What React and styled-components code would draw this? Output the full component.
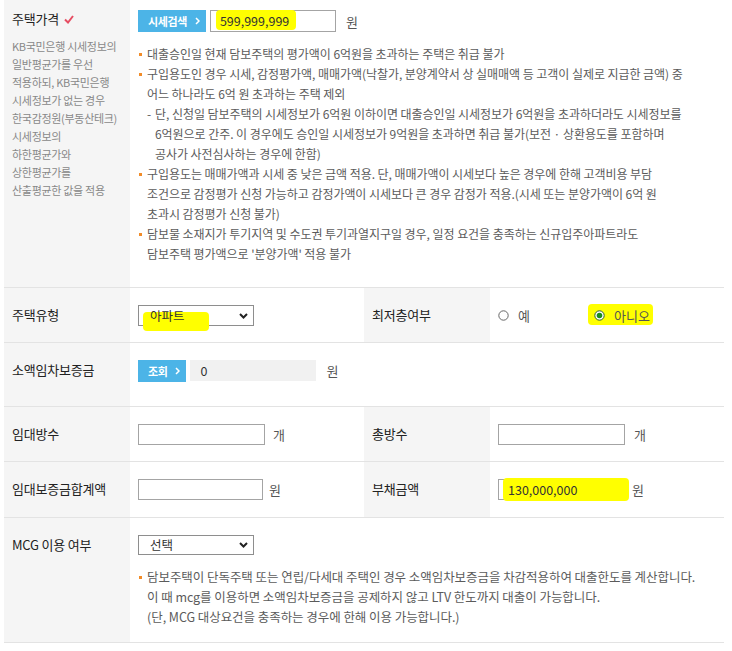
import React from "react";
import styled, { createGlobalStyle } from "styled-components";

const GlobalStyle = createGlobalStyle`
  html, body {
    margin: 0;
    padding: 0;
    background: #fff;
  }
  body {
    font-family: "Noto Sans CJK KR", "Noto Sans", sans-serif;
    color: #333;
  }
`;

const Table = styled.div`
  width: 720px;
  margin-left: 4px;
`;

const Row = styled.div`
  display: grid;
  grid-template-columns: ${(p) => (p.$split ? "126px 234px 126px 1fr" : "126px 1fr")};
  border-bottom: 1px solid #e3e3e3;
`;

const Label = styled.div`
  background: #f5f5f5;
  padding: ${(p) => (p.$first ? "9px" : "17px")} 8px 16px;
  font-size: 13px;
  line-height: 20px;
  letter-spacing: -0.2px;
  color: #222;
  white-space: nowrap;
`;

const Title = styled.div`
  display: flex;
  align-items: center;
  gap: 5px;
`;

const Desc = styled.div`
  margin-top: 8px;
  font-size: 11px;
  line-height: 18px;
  letter-spacing: -0.3px;
  color: #888;
`;

const Cell = styled.div`
  padding: ${(p) => (p.$first ? "10px" : "17px")} 8px ${(p) => p.$bottom || 16}px;
`;

const Line = styled.div`
  display: flex;
  align-items: center;
  height: ${(p) => p.$h || 21}px;
`;

const Button = styled.div`
  display: flex;
  align-items: center;
  gap: 8px;
  height: 22px;
  padding: 0 6px 0 10px;
  margin-right: 4px;
  background: #4cb4e7;
  color: #fff;
  font-size: 11px;
  font-weight: 700;
  letter-spacing: -0.4px;
`;

const Field = styled.div`
  position: relative;
  display: flex;
  align-items: center;
  box-sizing: border-box;
  width: ${(p) => p.$w || 126}px;
  height: ${(p) => p.$h || 21}px;
  padding-left: ${(p) => p.$pl || 9}px;
  border: 1px solid ${(p) => (p.$muted ? "#f1f1f1" : "#a4a4a4")};
  background: ${(p) => (p.$muted ? "#f1f1f1" : "#fff")};
  font-size: 12.5px;
  line-height: 16px;
  color: #333;
`;

const Unit = styled.span`
  margin-left: ${(p) => p.$gap || 9}px;
  font-size: 13px;
  color: #555;
`;

const Marker = styled.span`
  position: relative;
  z-index: 0;
  display: inline-flex;
  align-items: center;

  &::before {
    content: "";
    position: absolute;
    z-index: -1;
    inset: ${(p) => p.$inset};
    background: #ffff00;
    border-radius: 4px;
  }
`;

const SelectBox = styled.div`
  display: flex;
  align-items: center;
  justify-content: space-between;
  box-sizing: border-box;
  width: 116px;
  height: ${(p) => p.$h || 21}px;
  padding: 0 5px 0 11px;
  border: 1px solid #8e8e8e;
  background: #fff;
  font-size: 12.5px;
  line-height: 16px;
  color: #333;
`;

const RadioGroup = styled.div`
  display: flex;
  align-items: center;
  height: 21px;
`;

const RadioOption = styled.div`
  display: flex;
  align-items: center;
  gap: 9px;
  min-width: ${(p) => p.$w || 0}px;
  font-size: 13px;
  line-height: 16px;
  color: #555;
`;

const Notes = styled.ul`
  list-style: none;
  margin: ${(p) => p.$mt || 12}px 0 0;
  padding: 0;
  font-size: ${(p) => p.$fs || 12}px;
  line-height: 20px;
  letter-spacing: -0.05px;
  color: #5b5b5b;
  white-space: nowrap;
`;

const Note = styled.li`
  position: relative;
  padding-left: 9px;

  &::before {
    content: "";
    position: absolute;
    left: 1px;
    top: 9px;
    width: 3px;
    height: 3px;
    background: #f28c28;
  }
`;

const SubNote = styled.li`
  position: relative;
  padding-left: 17px;

  &::before {
    content: "-";
    position: absolute;
    left: 9px;
    top: 0;
  }
`;

const Check = () => (
  <svg width="10" height="9" viewBox="0 0 10 9">
    <path d="M1 4.5 L4 7.5 L9 1" fill="none" stroke="#e64d62" strokeWidth="2" />
  </svg>
);

const Arrow = () => (
  <svg width="5" height="8" viewBox="0 0 5 8">
    <path d="M1 1 L4 4 L1 7" fill="none" stroke="#fff" strokeWidth="1.5" />
  </svg>
);

const Chevron = () => (
  <svg width="9" height="6" viewBox="0 0 9 6">
    <path d="M1 1 L4.5 4.5 L8 1" fill="none" stroke="#222" strokeWidth="2" />
  </svg>
);

const Radio = ({ checked }) => (
  <svg width="11" height="11" viewBox="0 0 11 11">
    <circle cx="5.5" cy="5.5" r="4.7" fill="#fff" stroke={checked ? "#2f5f2f" : "#666"} strokeWidth="1" />
    {checked && <circle cx="5.5" cy="5.5" r="2.8" fill="#1b8c1b" />}
  </svg>
);

const Lines = ({ lines }) =>
  lines.map((l, i) => (
    <React.Fragment key={i}>
      {i > 0 && <br />}
      {l}
    </React.Fragment>
  ));

const priceDesc = [
  "KB국민은행 시세정보의",
  "일반평균가를 우선",
  "적용하되, KB국민은행",
  "시세정보가 없는 경우",
  "한국감정원(부동산테크)",
  "시세정보의",
  "하한평균가와",
  "상한평균가를",
  "산출평균한 값을 적용",
];

const priceNotes = [
  { lines: ["대출승인일 현재 담보주택의 평가액이 6억원을 초과하는 주택은 취급 불가"] },
  {
    lines: [
      "구입용도인 경우 시세, 감정평가액, 매매가액(낙찰가, 분양계약서 상 실매매액 등 고객이 실제로 지급한 금액) 중",
      "어느 하나라도 6억 원 초과하는 주택 제외",
    ],
  },
  {
    sub: true,
    lines: [
      "단, 신청일 담보주택의 시세정보가 6억원 이하이면 대출승인일 시세정보가 6억원을 초과하더라도 시세정보를",
      "6억원으로 간주. 이 경우에도 승인일 시세정보가 9억원을 초과하면 취급 불가(보전 · 상환용도를 포함하며",
      "공사가 사전심사하는 경우에 한함)",
    ],
  },
  {
    lines: [
      "구입용도는 매매가액과 시세 중 낮은 금액 적용. 단, 매매가액이 시세보다 높은 경우에 한해 고객비용 부담",
      "조건으로 감정평가 신청 가능하고 감정가액이 시세보다 큰 경우 감정가 적용.(시세 또는 분양가액이 6억 원",
      "초과시 감정평가 신청 불가)",
    ],
  },
  {
    lines: [
      "담보물 소재지가 투기지역 및 수도권 투기과열지구일 경우, 일정 요건을 충족하는 신규입주아파트라도",
      "담보주택 평가액으로 '분양가액' 적용 불가",
    ],
  },
];

const mcgNote = [
  "담보주택이 단독주택 또는 연립/다세대 주택인 경우 소액임차보증금을 차감적용하여 대출한도를 계산합니다.",
  "이 때 mcg를 이용하면 소액임차보증금을 공제하지 않고 LTV 한도까지 대출이 가능합니다.",
  "(단, MCG 대상요건을 충족하는 경우에 한해 이용 가능합니다.)",
];

const App = () => {
  return (
    <>
      <GlobalStyle />
      <Table>
        <Row>
          <Label $first>
            <Title>
              주택가격 <Check />
            </Title>
            <Desc>
              <Lines lines={priceDesc} />
            </Desc>
          </Label>
          <Cell $first $bottom={23}>
            <Line $h={22}>
              <Button>
                시세검색 <Arrow />
              </Button>
              <Field $h={22} $pl={9}>
                <Marker $inset="-3px -7px -1px -4px">599,999,999</Marker>
              </Field>
              <Unit $gap={10}>원</Unit>
            </Line>
            <Notes>
              {priceNotes.map((n, i) =>
                n.sub ? (
                  <SubNote key={i}>
                    <Lines lines={n.lines} />
                  </SubNote>
                ) : (
                  <Note key={i}>
                    <Lines lines={n.lines} />
                  </Note>
                )
              )}
            </Notes>
          </Cell>
        </Row>

        <Row $split>
          <Label>주택유형</Label>
          <Cell>
            <Line>
              <SelectBox>
                <Marker $inset="4px -24px -7px -7px">아파트</Marker>
                <Chevron />
              </SelectBox>
            </Line>
          </Cell>
          <Label>최저층여부</Label>
          <Cell>
            <RadioGroup>
              <RadioOption $w={96}>
                <Radio /> 예
              </RadioOption>
              <Marker $inset="-4px -3px -1px -6px">
                <RadioOption>
                  <Radio checked /> 아니오
                </RadioOption>
              </Marker>
            </RadioGroup>
          </Cell>
        </Row>

        <Row>
          <Label>소액임차보증금</Label>
          <Cell $bottom={25}>
            <Line>
              <Button>
                조회 <Arrow />
              </Button>
              <Field $muted $pl={9}>0</Field>
              <Unit $gap={10}>원</Unit>
            </Line>
          </Cell>
        </Row>

        <Row $split>
          <Label>임대방수</Label>
          <Cell>
            <Line>
              <Field $w={127} />
              <Unit $gap={8}>개</Unit>
            </Line>
          </Cell>
          <Label>총방수</Label>
          <Cell>
            <Line>
              <Field $w={127} />
              <Unit $gap={9}>개</Unit>
            </Line>
          </Cell>
        </Row>

        <Row $split>
          <Label>임대보증금합계액</Label>
          <Cell $bottom={17}>
            <Line>
              <Field $w={125} />
              <Unit $gap={6}>원</Unit>
            </Line>
          </Cell>
          <Label>부채금액</Label>
          <Cell $bottom={17}>
            <Line>
              <Field $w={126} $pl={9}>
                <Marker $inset="-4px -52px -3px -5px">130,000,000</Marker>
              </Field>
              <Unit $gap={8}>원</Unit>
            </Line>
          </Cell>
        </Row>

        <Row>
          <Label>MCG 이용 여부</Label>
          <Cell $bottom={15}>
            <Line $h={20}>
              <SelectBox $h={20}>
                선택
                <Chevron />
              </SelectBox>
            </Line>
            <Notes $mt={12} $fs={12.5}>
              <Note>
                <Lines lines={mcgNote} />
              </Note>
            </Notes>
          </Cell>
        </Row>
      </Table>
    </>
  );
};

export default App;
